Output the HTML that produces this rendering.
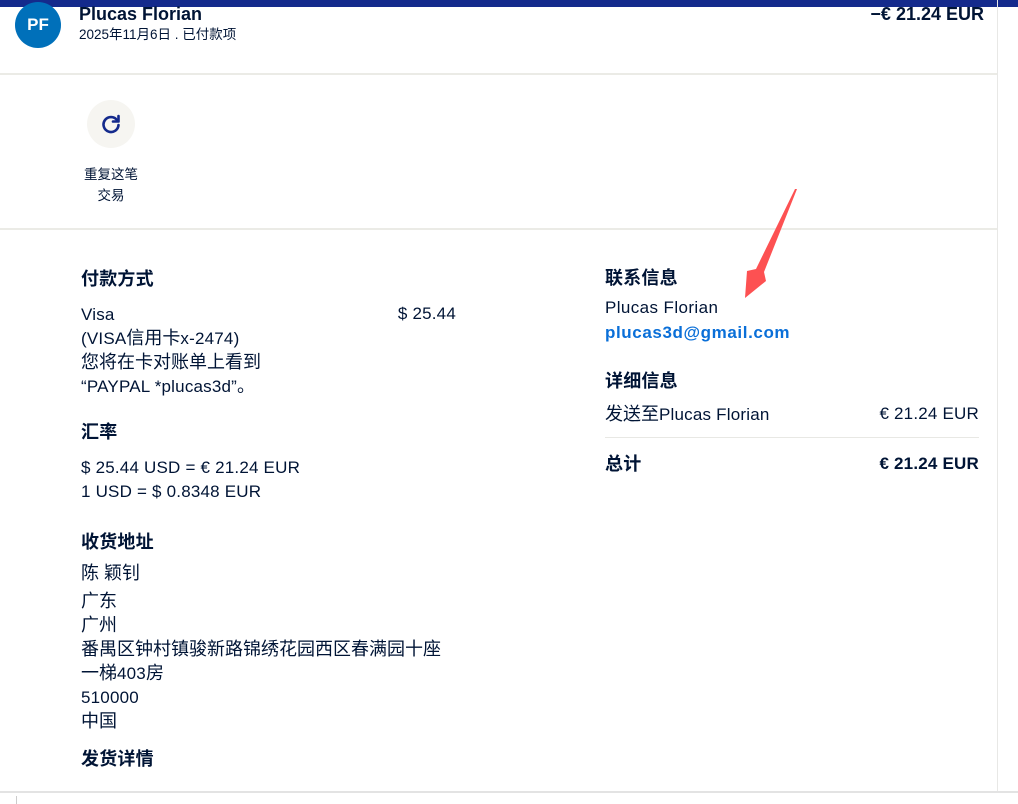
<!DOCTYPE html>
<html><head><meta charset="utf-8"><style>
*{margin:0;padding:0;box-sizing:border-box}
body{width:1018px;height:804px;background:#fff;position:relative;overflow:hidden;font-family:"Liberation Sans","Noto Sans CJK SC",sans-serif;color:#001435}
.a{position:absolute;white-space:nowrap;line-height:1}
.b{font-weight:bold}
.h{font-size:18px;font-weight:bold;letter-spacing:0.2px}
.t{font-size:17px;letter-spacing:0.2px}
.c{font-size:18px;letter-spacing:0;line-height:1}
</style></head><body>
<div class="a" style="left:0;top:0;width:1018px;height:7px;background:#142a8c"></div>
<div class="a" style="left:997px;top:0;width:1px;height:792px;background:#e8e8e6"></div>
<div class="a" style="left:15px;top:2px;width:46px;height:46px;border-radius:50%;background:#0070ba;color:#fff;font-weight:bold;font-size:17px;text-align:center;line-height:46px">PF</div>
<div class="a b" style="left:79px;top:5px;font-size:18px">Plucas Florian</div>
<div class="a" style="left:79px;top:28px;font-size:13.5px">2025年11月6日 . 已付款项</div>
<div class="a b" style="right:34px;top:5px;font-size:18px">−€ 21.24 EUR</div>
<div class="a" style="left:0;top:73px;width:997px;height:2px;background:#ebebe6"></div>
<div class="a" style="left:87px;top:100px;width:48px;height:48px;border-radius:50%;background:#f6f5f1"></div>
<svg class="a" style="left:99px;top:112px" width="24" height="24" viewBox="0 0 24 24"><path d="M18 8A7.5 7.5 0 1 0 19.5 13" fill="none" stroke="#142a8c" stroke-width="2.6" stroke-linecap="round"/><path d="M19.5 4V9.5H14" fill="none" stroke="#142a8c" stroke-width="2.6" stroke-linecap="round" stroke-linejoin="round"/></svg>
<div class="a" style="left:66px;top:164px;width:90px;text-align:center;font-size:13.5px;line-height:21px;white-space:normal">重复这笔<br>交易</div>
<div class="a" style="left:0;top:228px;width:997px;height:2px;background:#ebebe6"></div>
<div class="a h" style="left:81px;top:270px">付款方式</div>
<div class="a t" style="left:81px;top:303px;line-height:24px;white-space:normal;width:320px">Visa<br>(VISA<span class="c">信用卡</span>x-2474)<br><span class="c">您将在卡对账单上看到</span><br>“PAYPAL *plucas3d”<span class="c">。</span></div>
<div class="a t" style="right:562px;top:305px">$ 25.44</div>
<div class="a h" style="left:81px;top:423px">汇率</div>
<div class="a t" style="left:81px;top:456px;line-height:24px">$ 25.44 USD = € 21.24 EUR<br>1 USD = $ 0.8348 EUR</div>
<div class="a h" style="left:81px;top:533px">收货地址</div>
<div class="a t c" style="left:81px;top:564px">陈 颖钊</div>
<div class="a t" style="left:81px;top:590px;line-height:24px"><span class="c">广东</span><br><span class="c">广州</span><br><span class="c">番禺区钟村镇骏新路锦绣花园西区春满园十座</span><br><span class="c">一梯</span>403<span class="c">房</span><br>510000<br><span class="c">中国</span></div>
<div class="a h" style="left:81px;top:750px">发货详情</div>
<div class="a h" style="left:605px;top:269px">联系信息</div>
<div class="a t" style="left:605px;top:299px;letter-spacing:0.4px">Plucas Florian</div>
<div class="a t b" style="left:605px;top:324px;color:#0a6fd8;letter-spacing:0.6px">plucas3d@gmail.com</div>
<div class="a h" style="left:605px;top:372px">详细信息</div>
<div class="a t" style="left:605px;top:405px"><span class="c">发送至</span>Plucas Florian</div>
<div class="a t" style="right:39px;top:405px">€ 21.24 EUR</div>
<div class="a" style="left:605px;top:437px;width:374px;height:1px;background:#e8e8e4"></div>
<div class="a h" style="left:605px;top:455px">总计</div>
<div class="a t b" style="right:39px;top:455px;letter-spacing:0.2px">€ 21.24 EUR</div>
<svg class="a" style="left:0;top:0" width="1018" height="804"><polygon points="797,189 764,272 766,281 745,298 747,271 756,269 795,189" fill="#fd5152"/></svg>
<div class="a" style="left:0;top:791px;width:1018px;height:2px;background:#e3e3e3"></div>
<div class="a" style="left:16px;top:796px;width:1px;height:8px;background:#ccc"></div>
</body></html>
